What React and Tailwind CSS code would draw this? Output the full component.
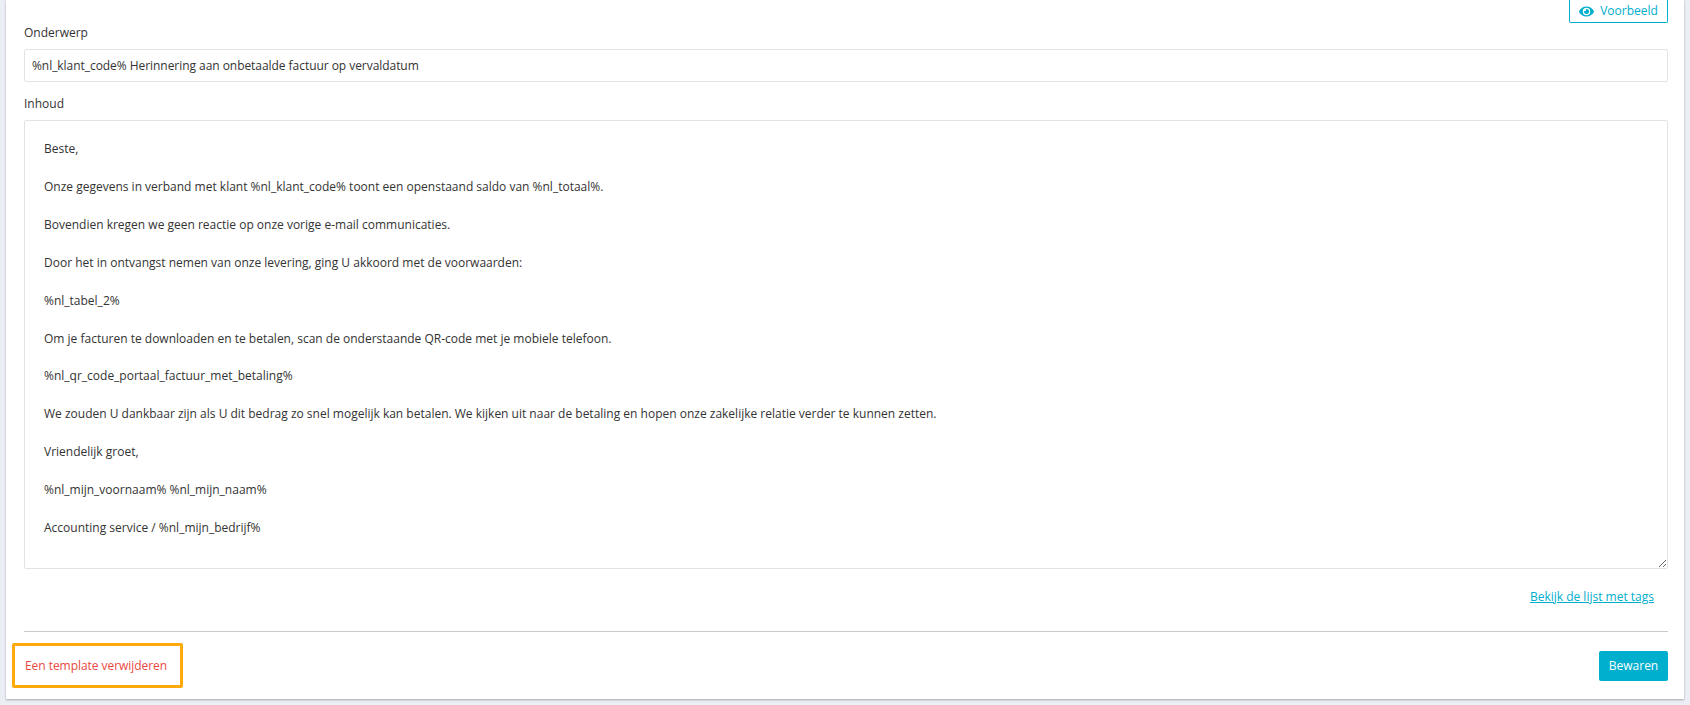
import React from "react";
import { FaEye } from "react-icons/fa";

const body = `Beste,

Onze gegevens in verband met klant %nl_klant_code% toont een openstaand saldo van %nl_totaal%.

Bovendien kregen we geen reactie op onze vorige e-mail communicaties.

Door het in ontvangst nemen van onze levering, ging U akkoord met de voorwaarden:

%nl_tabel_2%

Om je facturen te downloaden en te betalen, scan de onderstaande QR-code met je mobiele telefoon.

%nl_qr_code_portaal_factuur_met_betaling%

We zouden U dankbaar zijn als U dit bedrag zo snel mogelijk kan betalen. We kijken uit naar de betaling en hopen onze zakelijke relatie verder te kunnen zetten.

Vriendelijk groet,

%nl_mijn_voornaam% %nl_mijn_naam%

Accounting service / %nl_mijn_bedrijf%`;

const App = () => {
  return (
    <div className="h-[705px] overflow-hidden bg-[#ebeef4] px-[6px] font-['Open_Sans',sans-serif] text-[12px] text-[#333]">
      <div className="h-[699px] bg-white pl-[18px] pr-[16px] shadow-[0_1px_2px_rgba(0,0,0,0.3)]">
        <div className="flex h-[23px] justify-end">
          <button className="flex h-[23px] w-[99px] items-center justify-center gap-[6px] rounded-b-[2px] border border-t-0 border-[#00aecd] text-[#00aecd]">
            <FaEye size={15} />
            Voorbeeld
          </button>
        </div>
        <label className="block h-[26px] leading-[19px]">Onderwerp</label>
        <input
          defaultValue="%nl_klant_code% Herinnering aan onbetaalde factuur op vervaldatum"
          className="block h-[33px] w-full rounded-[2px] border border-[#e2e3e5] px-[7px] pb-[1px] tracking-[-0.05px] outline-none"
        />
        <label className="mt-[14px] block h-[24px] leading-[16px]">Inhoud</label>
        <textarea
          defaultValue={body}
          className="block h-[449px] w-full rounded-[2px] border border-[#e2e3e5] px-[19px] py-[19px] leading-[18.95px] outline-none"
        />
        <div className="flex h-[62px] items-center justify-end pb-[7px] pr-[14px]">
          <a href="#" className="text-[#00aecd] underline">Bekijk de lijst met tags</a>
        </div>
        <div className="border-t border-[#c8c9cb]" />
        <div className="mt-[11px] flex items-start justify-between">
          <div className="-ml-[12px] flex h-[45px] w-[171px] items-center justify-center rounded-[2px] border-[3px] border-[#ffa90a] pr-[3px] tracking-[-0.05px] text-[#e8483f]">
            Een template verwijderen
          </div>
          <button className="mt-[8px] h-[30px] w-[69px] rounded-[2px] bg-[#00aecd] text-white">Bewaren</button>
        </div>
      </div>
    </div>
  );
};

export default App;
